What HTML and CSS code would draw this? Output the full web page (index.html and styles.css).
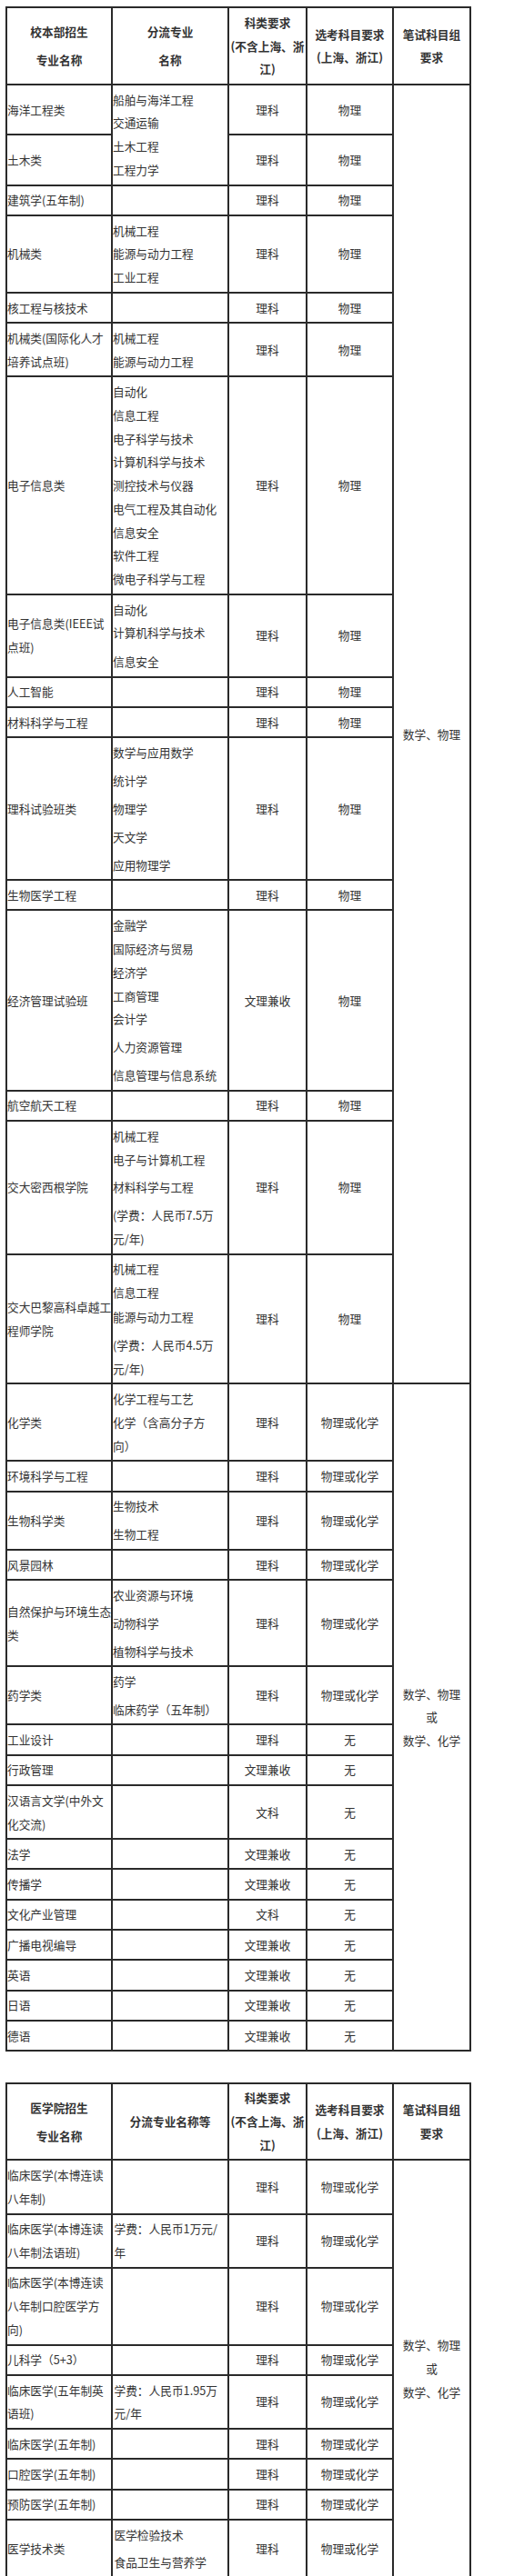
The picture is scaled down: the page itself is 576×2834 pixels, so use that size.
FILE: index.html
```html
<!DOCTYPE html>
<html lang="zh-CN">
<head>
<meta charset="utf-8">
<title>招生专业选考科目要求</title>
<link rel="stylesheet" href="styles.css">
</head>
<body>
<div class="page">
<table class="t">
<colgroup>
<col class="w1"><col class="w2"><col class="w3"><col class="w4"><col class="w5">
</colgroup>
<thead>
<tr>
<th><div>校本部招生</div><div class="g5">专业名称</div></th>
<th><div>分流专业</div><div class="g5">名称</div></th>
<th>科类要求<br>(不含上海、浙<br>江)</th>
<th>选考科目要求<br>(上海、浙江)</th>
<th>笔试科目组<br>要求</th>
</tr>
</thead>
<tbody>
<tr><td>海洋工程类</td><td class="l" rowspan="2">船舶与海洋工程<br>交通运输<br>土木工程<br>工程力学</td><td class="c">理科</td><td class="c">物理</td><td class="c" rowspan="16">数学、物理</td></tr>
<tr><td>土木类</td><td class="c">理科</td><td class="c">物理</td></tr>
<tr><td>建筑学(五年制)</td><td></td><td class="c">理科</td><td class="c">物理</td></tr>
<tr><td>机械类</td><td class="l">机械工程<br>能源与动力工程<br>工业工程</td><td class="c">理科</td><td class="c">物理</td></tr>
<tr><td>核工程与核技术</td><td></td><td class="c">理科</td><td class="c">物理</td></tr>
<tr><td>机械类(国际化人才<br>培养试点班)</td><td class="l">机械工程<br>能源与动力工程</td><td class="c">理科</td><td class="c">物理</td></tr>
<tr><td>电子信息类</td><td class="l">自动化<br>信息工程<br>电子科学与技术<br>计算机科学与技术<br>测控技术与仪器<br>电气工程及其自动化<br>信息安全<br>软件工程<br>微电子科学与工程</td><td class="c">理科</td><td class="c">物理</td></tr>
<tr><td>电子信息类(IEEE试<br>点班)</td><td class="l"><div>自动化</div><div>计算机科学与技术</div><div class="g6">信息安全</div></td><td class="c">理科</td><td class="c">物理</td></tr>
<tr><td>人工智能</td><td></td><td class="c">理科</td><td class="c">物理</td></tr>
<tr><td>材料科学与工程</td><td></td><td class="c">理科</td><td class="c">物理</td></tr>
<tr><td>理科试验班类</td><td class="l"><div>数学与应用数学</div><div class="g5">统计学</div><div class="g5">物理学</div><div class="g5">天文学</div><div class="g5">应用物理学</div></td><td class="c">理科</td><td class="c">物理</td></tr>
<tr><td>生物医学工程</td><td></td><td class="c">理科</td><td class="c">物理</td></tr>
<tr><td>经济管理试验班</td><td class="l"><div>金融学</div><div>国际经济与贸易</div><div>经济学</div><div>工商管理</div><div>会计学</div><div class="g5">人力资源管理</div><div class="g5">信息管理与信息系统</div></td><td class="c">文理兼收</td><td class="c">物理</td></tr>
<tr><td>航空航天工程</td><td></td><td class="c">理科</td><td class="c">物理</td></tr>
<tr><td>交大密西根学院</td><td class="l"><div>机械工程</div><div>电子与计算机工程</div><div class="g5">材料科学与工程</div><div class="g5">(学费：人民币7.5万</div><div>元/年)</div></td><td class="c">理科</td><td class="c">物理</td></tr>
<tr><td>交大巴黎高科卓越工<br>程师学院</td><td class="l"><div>机械工程</div><div>信息工程</div><div class="g1">能源与动力工程</div><div class="g5">(学费：人民币4.5万</div><div>元/年)</div></td><td class="c">理科</td><td class="c">物理</td></tr>
<tr><td>化学类</td><td class="l">化学工程与工艺<br>化学（含高分子方<br>向）</td><td class="c">理科</td><td class="c">物理或化学</td><td class="c" rowspan="16">数学、物理<br>或<br>数学、化学</td></tr>
<tr><td>环境科学与工程</td><td></td><td class="c">理科</td><td class="c">物理或化学</td></tr>
<tr><td>生物科学类</td><td class="l"><div>生物技术</div><div class="g5">生物工程</div></td><td class="c">理科</td><td class="c">物理或化学</td></tr>
<tr><td>风景园林</td><td></td><td class="c">理科</td><td class="c">物理或化学</td></tr>
<tr><td>自然保护与环境生态<br>类</td><td class="l"><div>农业资源与环境</div><div class="g5">动物科学</div><div class="g5">植物科学与技术</div></td><td class="c">理科</td><td class="c">物理或化学</td></tr>
<tr><td>药学类</td><td class="l"><div>药学</div><div class="g5">临床药学（五年制）</div></td><td class="c">理科</td><td class="c">物理或化学</td></tr>
<tr><td>工业设计</td><td></td><td class="c">理科</td><td class="c">无</td></tr>
<tr><td>行政管理</td><td></td><td class="c">文理兼收</td><td class="c">无</td></tr>
<tr><td>汉语言文学(中外文<br>化交流)</td><td></td><td class="c">文科</td><td class="c">无</td></tr>
<tr><td>法学</td><td></td><td class="c">文理兼收</td><td class="c">无</td></tr>
<tr><td>传播学</td><td></td><td class="c">文理兼收</td><td class="c">无</td></tr>
<tr><td>文化产业管理</td><td></td><td class="c">文科</td><td class="c">无</td></tr>
<tr><td>广播电视编导</td><td></td><td class="c">文理兼收</td><td class="c">无</td></tr>
<tr><td>英语</td><td></td><td class="c">文理兼收</td><td class="c">无</td></tr>
<tr><td>日语</td><td></td><td class="c">文理兼收</td><td class="c">无</td></tr>
<tr><td>德语</td><td></td><td class="c">文理兼收</td><td class="c">无</td></tr>
</tbody>
</table>

<table class="t t2">
<colgroup>
<col class="w1"><col class="w2"><col class="w3"><col class="w4"><col class="w5">
</colgroup>
<thead>
<tr>
<th><div>医学院招生</div><div class="g5">专业名称</div></th>
<th>分流专业名称等</th>
<th>科类要求<br>(不含上海、浙<br>江)</th>
<th>选考科目要求<br>(上海、浙江)</th>
<th>笔试科目组<br>要求</th>
</tr>
</thead>
<tbody>
<tr><td>临床医学(本博连读<br>八年制)</td><td class="l"></td><td class="c">理科</td><td class="c">物理或化学</td><td class="c" rowspan="10">数学、物理<br>或<br>数学、化学</td></tr>
<tr><td>临床医学(本博连读<br>八年制法语班)</td><td class="l pad">学费：人民币1万元/<br>年</td><td class="c">理科</td><td class="c">物理或化学</td></tr>
<tr><td>临床医学(本博连读<br>八年制口腔医学方<br>向)</td><td class="l"></td><td class="c">理科</td><td class="c">物理或化学</td></tr>
<tr><td>儿科学（5+3）</td><td class="l"></td><td class="c">理科</td><td class="c">物理或化学</td></tr>
<tr><td>临床医学(五年制英<br>语班)</td><td class="l pad">学费：人民币1.95万<br>元/年</td><td class="c">理科</td><td class="c">物理或化学</td></tr>
<tr><td>临床医学(五年制)</td><td class="l"></td><td class="c">理科</td><td class="c">物理或化学</td></tr>
<tr><td>口腔医学(五年制)</td><td class="l"></td><td class="c">理科</td><td class="c">物理或化学</td></tr>
<tr><td>预防医学(五年制)</td><td class="l"></td><td class="c">理科</td><td class="c">物理或化学</td></tr>
<tr><td>医学技术类</td><td class="l pad"><div>医学检验技术</div><div class="g4">食品卫生与营养学</div></td><td class="c">理科</td><td class="c">物理或化学</td></tr>
</tbody>
</table>
</div>
</body>
</html>
```

FILE: styles.css
```css
html, body {
  margin: 0;
  padding: 0;
  background: #ffffff;
}

body {
  font-family: "Noto Sans CJK SC", "Microsoft YaHei", sans-serif;
  font-size: 12.7px;
  color: #333333;
}

.page {
  padding: 7px 0 0 6px;
}

.t {
  border-collapse: separate;
  border-spacing: 0;
  table-layout: fixed;
  width: 512px;
  border-top: 2px solid #2a2a2a;
  border-left: 2px solid #2a2a2a;
}

.t2 {
  margin-top: 33.4px;
}

.w1 { width: 116px; }
.w2 { width: 128px; }
.w3 { width: 86px; }
.w4 { width: 95px; }
.w5 { width: 85px; }

.t th,
.t td {
  border-right: 2px solid #2a2a2a;
  border-bottom: 2px solid #2a2a2a;
  padding: 2.75px 0;
  line-height: 25.8px;
  vertical-align: middle;
  white-space: nowrap;
  overflow: hidden;
  text-align: left;
}

.t th {
  font-weight: bold;
  text-align: center;
}

.t td.c {
  text-align: center;
}

.t td.l {
  text-align: left;
}

.t td.pad {
  padding-left: 1.5px;
}

.g1 { margin-top: 1.2px; }
.g4 { margin-top: 4.2px; }
.g5 { margin-top: 5.1px; }
.g6 { margin-top: 6px; }
```
